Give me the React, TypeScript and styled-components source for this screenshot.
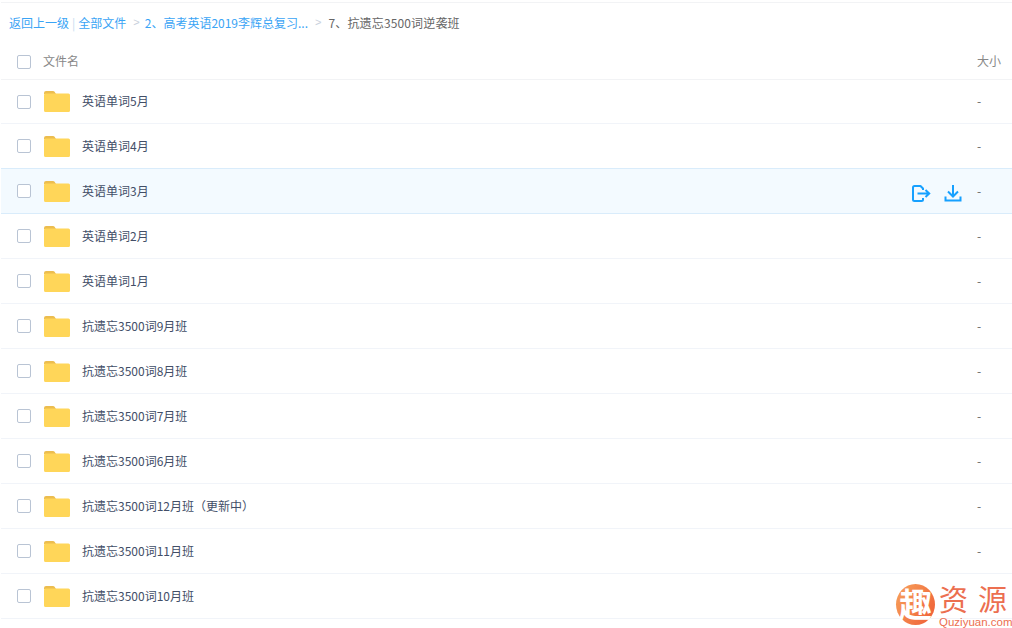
import React from "react";
import styled, { createGlobalStyle } from "styled-components";

const Global = createGlobalStyle`
  html, body { margin: 0; padding: 0; background: #fff; }
  body { font-family: "Noto Sans CJK SC", "Liberation Sans", sans-serif; }
`;

const Page = styled.div`
  position: relative;
  width: 1012px;
  height: 628px;
  overflow: hidden;
  background: #fff;
  padding: 2px 0 0 1px;
  box-sizing: border-box;
`;

const TopRule = styled.div`
  height: 1px;
  background: #f2f3f5;
`;

const Crumbs = styled.div`
  display: flex;
  align-items: center;
  height: 38px;
  padding-left: 8px;
  font-size: 12px;
  color: #666;
  white-space: nowrap;
`;

const CrumbLink = styled.span`
  color: #3aa4f5;
`;

const Current = styled.span`
  letter-spacing: 0.15px;
`;

const Pipe = styled.span`
  color: #c5dcf0;
  margin: 0 3px;
`;

const Sep = styled.span<{ $after: number }>`
  color: #c8d0dc;
  margin: 0 ${(p) => p.$after}px 0 7px;
  font-size: 11px;
  font-family: "Liberation Sans", sans-serif;
`;

const HeaderRow = styled.div`
  display: flex;
  align-items: center;
  height: 39px;
  padding-top: 1px;
  box-sizing: border-box;
  border-bottom: 1px solid #f2f3f5;
  font-size: 12px;
  color: #888;
`;

const Row = styled.div<{ $hover?: boolean; $first?: boolean }>`
  display: flex;
  align-items: center;
  height: ${(p) => (p.$first ? "44px" : "45px")};
  box-sizing: border-box;
  border-bottom: 1px solid ${(p) => (p.$hover ? "#d9ecfb" : "#f1f4f9")};
  background: ${(p) => (p.$hover ? "#f3faff" : "#fff")};
  box-shadow: ${(p) => (p.$hover ? "0 -1px 0 #d9ecfb" : "none")};
  font-size: 12px;
  color: #424e67;
`;

const Check = styled.span`
  flex: none;
  width: 14px;
  height: 14px;
  margin-left: 16px;
  border: 1px solid #b9c4d4;
  border-radius: 2px;
  background: #fff;
  box-sizing: border-box;
`;

const HeaderCheck = styled(Check)`
  margin-top: 3px;
`;

const HeaderTitle = styled.span`
  margin-left: 12px;
  flex: 1;
`;

const FolderSvg = styled.svg`
  flex: none;
  margin-left: 13px;
`;

const Name = styled.span`
  margin-left: 12px;
  flex: 1;
  white-space: nowrap;
  padding-bottom: 2px;
`;

const Paren = styled.span`
  font-family: "Noto Sans CJK TC", sans-serif;
`;

const Actions = styled.div`
  display: flex;
  align-items: center;
  gap: 13px;
  margin-right: 15px;
  transform: translateY(2px);
`;

const Size = styled.span`
  width: 35px;
  flex: none;
  color: #666;
  padding-bottom: 2px;
`;

const HeaderSize = styled(Size)`
  color: #888;
  padding-bottom: 0;
`;

const Watermark = styled.div`
  position: absolute;
  left: 896px;
  top: 584px;
  display: flex;
  align-items: flex-start;
  gap: 4px;
`;

const LogoBall = styled.div`
  width: 39px;
  height: 41px;
  border-radius: 50%;
  background: linear-gradient(120deg, #f7a35c, #ef5c35);
  color: #fff;
  font-size: 33px;
  line-height: 39px;
  font-weight: 700;
  text-align: center;
`;

const LogoText = styled.div`
  display: flex;
  flex-direction: column;
  width: 68px;
  color: #ec6f50;
`;

const LogoCn = styled.div`
  display: flex;
  justify-content: space-between;
  font-size: 29px;
  line-height: 29px;
  font-weight: 400;
  height: 32px;
`;

const LogoEn = styled.div`
  font-family: "Liberation Sans", sans-serif;
  font-size: 11.5px;
  line-height: 12px;
  white-space: nowrap;
`;

const Folder = () => (
  <FolderSvg width="26" height="21" viewBox="0 0 26 21">
    <path d="M0 2a2 2 0 0 1 2-2h7a2 2 0 0 1 1.6.8L12 3H0z" fill="#ecbd4f" />
    <path d="M0 4a1.5 1.5 0 0 1 1.5-1.5h23A1.5 1.5 0 0 1 26 4v15.5a1.5 1.5 0 0 1-1.5 1.5h-23A1.5 1.5 0 0 1 0 19.5z" fill="#ffd659" />
  </FolderSvg>
);

const ShareIcon = () => (
  <svg width="19" height="17" viewBox="0 0 19 17" fill="none" stroke="#16a0ff" strokeWidth="2">
    <path d="M11 5V3.5L8.5 1H2.5A1.5 1.5 0 0 0 1 2.5v12A1.5 1.5 0 0 0 2.5 16h7a1.5 1.5 0 0 0 1.5-1.5V13" strokeLinejoin="round" />
    <path d="M5.5 8.5H17M13.5 5l3.7 3.5-3.7 3.5" />
  </svg>
);

const DownloadIcon = () => (
  <svg width="18" height="17" viewBox="0 0 18 17" fill="none" stroke="#16a0ff" strokeWidth="2">
    <path d="M9 0v10.5M4 6.5l5 5 5-5" />
    <path d="M1.5 11.5v4h15v-4" />
  </svg>
);

const names = [
  "英语单词5月",
  "英语单词4月",
  "英语单词3月",
  "英语单词2月",
  "英语单词1月",
  "抗遗忘3500词9月班",
  "抗遗忘3500词8月班",
  "抗遗忘3500词7月班",
  "抗遗忘3500词6月班",
  "抗遗忘3500词12月班",
  "抗遗忘3500词11月班",
  "抗遗忘3500词10月班",
];

export default function App() {
  return (
    <Page>
      <Global />
      <TopRule />
      <Crumbs>
        <CrumbLink>返回上一级</CrumbLink>
        <Pipe>|</Pipe>
        <CrumbLink>全部文件</CrumbLink>
        <Sep $after={5}>&gt;</Sep>
        <CrumbLink>2、高考英语2019李辉总复习...</CrumbLink>
        <Sep $after={7}>&gt;</Sep>
        <Current>7、抗遗忘3500词逆袭班</Current>
      </Crumbs>
      <HeaderRow>
        <HeaderCheck />
        <HeaderTitle>文件名</HeaderTitle>
        <HeaderSize>大小</HeaderSize>
      </HeaderRow>
      {names.map((n, i) => (
        <Row key={n} $hover={i === 2} $first={i === 0}>
          <Check />
          <Folder />
          <Name>
            {n}
            {i === 9 && <Paren>（更新中）</Paren>}
          </Name>
          {i === 2 && (
            <Actions>
              <ShareIcon />
              <DownloadIcon />
            </Actions>
          )}
          <Size>{i === 11 ? "" : "-"}</Size>
        </Row>
      ))}
      <Watermark>
        <LogoBall>趣</LogoBall>
        <LogoText>
          <LogoCn>
            <span>资</span>
            <span>源</span>
          </LogoCn>
          <LogoEn>Quziyuan.com</LogoEn>
        </LogoText>
      </Watermark>
    </Page>
  );
}
